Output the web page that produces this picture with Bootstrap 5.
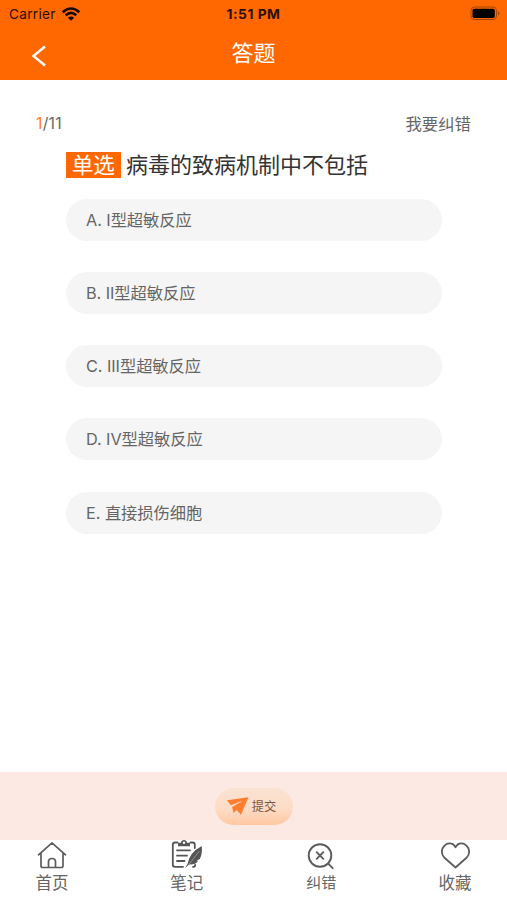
<!DOCTYPE html>
<html lang="zh-CN">
<head>
<meta charset="utf-8">
<meta name="viewport" content="width=device-width, initial-scale=1">
<title>答题</title>
<link href="https://cdn.jsdelivr.net/npm/bootstrap@5.3.0/dist/css/bootstrap.min.css" rel="stylesheet">
<style>
  body { font-family: Inter, "Noto Sans CJK SC", sans-serif; color: #666; background: #fff; height: 900px; overflow: hidden; }
  svg { display: block; flex: none; }
  .app-header { background: #ff6700; height: 79.5px; }
  .status-row { height: 27px; padding: 0 5px 0 9px; font-size: 13.6px; line-height: 28px; color: #2a1000; }
  .carrier { letter-spacing: .3px; }
  .status-time { font-size: 13.8px; letter-spacing: .5px; color: #2a1000; }
  .title-row { height: 52px; padding: 0 31px; }
  .back { margin-top: 6px; }
  .page-title { font-size: 22px; line-height: 52px; font-weight: 400; color: #fff; }
  .meta-row { padding: 31.5px 36px 0; font-size: 16.4px; line-height: 26px; }
  .current { color: #ff7a22; }
  .count { font-size: 15.8px; letter-spacing: .2px; }
  .question { padding: 13.5px 66px 0; }
  .question h1 { font-size: 22px; line-height: 28px; font-weight: 400; color: #333; }
  .kind { background: #ff6700; color: #fff; line-height: 26px; height: 26px; width: 54.5px; margin-right: 5.5px; font-size: 21.6px; text-align: center; }
  .options { padding: 20px 65.5px 0; gap: 31.3px; }
  .option { background: #f5f5f5; border-radius: 21px; height: 42px; padding: 0 20.5px; font-size: 16.3px; line-height: 42px; color: #666; border: 0; text-align: left; }
  .option { letter-spacing: -.06px; }
  .submit-bar { background: #fce9e4; height: 68px; }
  .btn-send { width: 78px; height: 37px; padding: 0 4px 0 0; border: 0; border-radius: 19px; font-size: 12.3px; color: #7c5741; background: linear-gradient(#fae3d2, #fddcc6 55%, #ffc8a2); gap: 3px; }
  .btn-send span { padding-top: 2px; }
  .tabs { height: 60px; padding: 0 35px; }
  .tab { color: #666; font-size: 16.5px; line-height: 24px; text-decoration: none; width: 34px; }
  .tab svg { height: 31px; }
  .tab span { white-space: nowrap; }
  .tab-note { margin-left: 1px; }
  .tab-fix { margin-left: 1px; }
  .tab-fix span { font-size: 15px; }
</style>
</head>
<body class="d-flex flex-column">
<header class="app-header">
  <div class="status-row d-flex justify-content-between align-items-center position-relative">
    <div class="d-flex align-items-center">
      <span class="carrier">Carrier</span>
      <svg class="ms-1" width="22" height="16" viewBox="0 0 22 16" fill="none" stroke="#160800" stroke-width="2.5">
        <path d="M2.7 6.2Q11 -1.3 19.3 6.2M5.7 9.2Q11 4.6 16.3 9.2"/>
        <path d="M11 14.8 7.9 11.7Q11 9.2 14.1 11.7Z" fill="#160800" stroke="none"/>
      </svg>
    </div>
    <span class="status-time fw-bold position-absolute start-50 translate-middle-x">1:51 PM</span>
    <svg width="32" height="15" viewBox="0 0 32 15">
      <rect x="1" y="1" width="25.5" height="12.5" rx="3.5" fill="none" stroke="#a84400"/>
      <rect x="2.5" y="2.7" width="22.3" height="9.2" rx="1.7" fill="#000"/>
      <path d="M28 5.2Q31 7.2 28 9.4Z" fill="#a84400"/>
    </svg>
  </div>
  <div class="title-row d-flex align-items-center position-relative">
    <svg class="back" width="16" height="22" viewBox="0 0 16 22" fill="none" stroke="#fff" stroke-width="2.4"><path d="M14 1.500 2.500 11 14 20.500"/></svg>
    <div class="page-title position-absolute start-50 translate-middle-x">答题</div>
  </div>
</header>
<main class="flex-grow-1">
  <div class="meta-row d-flex justify-content-between">
    <span class="count"><span class="current">1</span>/11</span>
    <span>我要纠错</span>
  </div>
  <div class="question">
    <h1 class="d-flex align-items-center m-0 text-nowrap"><span class="kind">单选</span>病毒的致病机制中不包括</h1>
  </div>
  <div class="options d-flex flex-column">
    <button class="option">A. I型超敏反应</button>
    <button class="option">B. II型超敏反应</button>
    <button class="option">C. III型超敏反应</button>
    <button class="option">D. IV型超敏反应</button>
    <button class="option">E. 直接损伤细胞</button>
  </div>
</main>
<div class="submit-bar d-flex align-items-center justify-content-center">
  <button class="btn btn-send d-flex align-items-center justify-content-center">
    <svg width="22" height="18" viewBox="0 0 22 18" fill="#ff7d31"><path d="M21.500.3 0 3.200 3.800 8.300 16.500 3.300 5.200 10 6.500 16 9.700 13 14 17.700Z"/></svg>
    <span>提交</span>
  </button>
</div>
<nav class="tabs d-flex justify-content-between">
  <a href="#" class="tab d-flex flex-column align-items-center">
    <svg width="32" viewBox="0 0 32 31" fill="none" stroke="#5c5c5c" stroke-width="1.7" stroke-linejoin="round" stroke-linecap="round"><path d="M2.500 14.800 16 2.800 29.500 14.800M5 13v12.700q0 1.800 1.800 1.800h18.400q1.800 0 1.800-1.800V13M12.500 27v-5.500q0-3 3.500-3t3.500 3V27"/></svg>
    <span>首页</span>
  </a>
  <a href="#" class="tab tab-note d-flex flex-column align-items-center">
    <svg width="32" viewBox="0 0 32 31" fill="none" stroke="#555" stroke-width="1.8" stroke-linecap="round"><path d="M6.500 2.500H4Q1.800 2.500 1.800 5v19.500q0 2.300 2.300 2.300H12M19.500 2.500h2q2.300 0 2.300 2.300V8M22 26.800h.6q1.600 0 1.600-2M6 10.300h13M6 15.700h10M6 21h7.500"/><path d="M7 6.300V2.800h3Q10.300 0 13 0t3 2.800h3v3.500Z" fill="#555" stroke="none"/><circle cx="13" cy="2.700" r="1.200" fill="#fff" stroke="none"/><path d="M30.800 6Q18.500 12.500 16.700 23.500L14 28l4-3.500q6.500.5 9-3.500l-1.200-.5 3-1.500q2.700-5 2-13Z" fill="#555" stroke="none"/><path d="M28 11.500 17.500 25" stroke="#aaa" stroke-width=".7"/></svg>
    <span>笔记</span>
  </a>
  <a href="#" class="tab tab-fix d-flex flex-column align-items-center">
    <svg width="32" viewBox="0 0 32 31" fill="none" stroke="#5c5c5c" stroke-width="1.9" stroke-linecap="round"><circle cx="15" cy="15.500" r="11.300"/><path d="m23.200 23.700 4.500 4.500M11.700 12.200l6.600 6.600M18.300 12.200l-6.600 6.600"/></svg>
    <span>纠错</span>
  </a>
  <a href="#" class="tab d-flex flex-column align-items-center">
    <svg width="32" viewBox="0 0 32 31" fill="none" stroke="#5c5c5c" stroke-width="1.8" stroke-linejoin="round"><path d="M16.500 27.500 5.500 17.800Q1.500 13.500 3.500 8.500 6 3.300 10.800 3.300q3.700 0 5.700 4 2-4 5.700-4 4.800 0 7.300 5.200 2 5-2 9.300Z"/></svg>
    <span>收藏</span>
  </a>
</nav>
<script src="https://cdn.jsdelivr.net/npm/bootstrap@5.3.0/dist/js/bootstrap.bundle.min.js"></script>
</body>
</html>
